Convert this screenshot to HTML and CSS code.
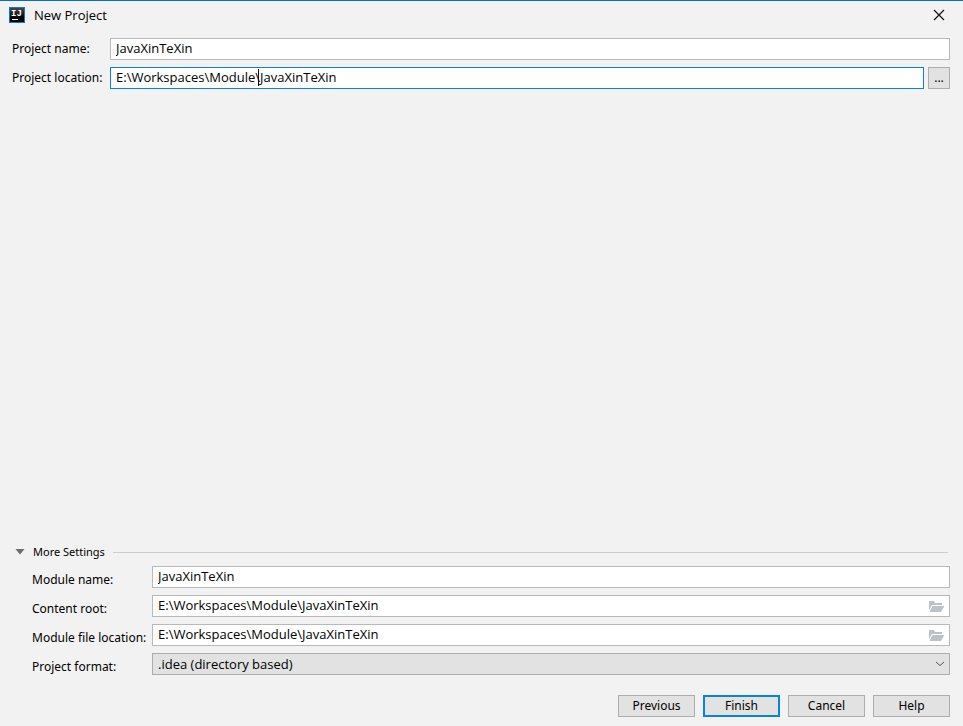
FILE: index.html
```
<!DOCTYPE html>
<html lang="en">
<head>
    <meta charset="UTF-8">
    <meta name="viewport" content="width=device-width, initial-scale=1.0">
    <title>New Project</title>
    <link rel="stylesheet" href="styles.css">
</head>
<body>
    <header class="title-bar">
        <svg class="app-icon" width="16" height="16" viewBox="0 0 16 16" aria-hidden="true">
            <defs>
                <linearGradient id="iconFill" x1="0" y1="0" x2="0" y2="1">
                    <stop offset="0" stop-color="#4a4a4a"/>
                    <stop offset="0.7" stop-color="#000"/>
                </linearGradient>
            </defs>
            <rect x="0.5" y="0.5" width="15" height="15" fill="url(#iconFill)" stroke="#087cdc"/>
            <text x="2" y="9" class="app-icon-text">IJ</text>
            <rect x="3" y="12" width="6" height="1" fill="#fff"/>
        </svg>
        <h1>New Project</h1>
        <button type="button" class="close-btn" aria-label="Close">
            <svg width="12" height="12" viewBox="0 0 12 12">
                <path d="M1 1 L11 11 M11 1 L1 11" stroke="#111" stroke-width="1.2" fill="none"/>
            </svg>
        </button>
    </header>

    <form class="project-form" id="projectForm">
        <div class="form-row">
            <label for="projectName">Project name:</label>
            <input type="text" id="projectName" value="JavaXinTeXin" spellcheck="false">
        </div>
        <div class="form-row">
            <label for="projectLocation">Project location:</label>
            <div class="field">
                <input type="text" class="active" id="projectLocation" value="E:\Workspaces\Module\JavaXinTeXin" spellcheck="false">
                <span class="caret"></span>
            </div>
            <button type="button" class="browse-btn" aria-label="Browse">...</button>
        </div>

        <section class="more-settings">
            <h2>
                <svg width="10" height="6" viewBox="0 0 10 6" aria-hidden="true">
                    <path d="M0.5 0 H9.5 L5 5.5 Z" fill="#6e6e6e"/>
                </svg>
                More Settings
            </h2>
            <div class="form-row">
                <label for="moduleName">Module name:</label>
                <input type="text" id="moduleName" value="JavaXinTeXin" spellcheck="false">
            </div>
            <div class="form-row">
                <label for="contentRoot">Content root:</label>
                <div class="field">
                    <input type="text" id="contentRoot" value="E:\Workspaces\Module\JavaXinTeXin" spellcheck="false">
                    <svg class="folder" width="16" height="12" viewBox="0 0 16 12" aria-hidden="true">
                        <path d="M0 9 V0 H5 L6 2 H13 V4 H3 Z" fill="#bcc3c8"/>
                        <path d="M3.5 5 H15.5 L12 11 H0.5 Z" fill="#bcc3c8"/>
                    </svg>
                </div>
            </div>
            <div class="form-row">
                <label for="moduleLocation">Module file location:</label>
                <div class="field">
                    <input type="text" id="moduleLocation" value="E:\Workspaces\Module\JavaXinTeXin" spellcheck="false">
                    <svg class="folder" width="16" height="12" viewBox="0 0 16 12" aria-hidden="true">
                        <path d="M0 9 V0 H5 L6 2 H13 V4 H3 Z" fill="#bcc3c8"/>
                        <path d="M3.5 5 H15.5 L12 11 H0.5 Z" fill="#bcc3c8"/>
                    </svg>
                </div>
            </div>
            <div class="form-row">
                <label for="projectFormat">Project format:</label>
                <div class="field">
                    <select id="projectFormat">
                        <option>.idea (directory based)</option>
                        <option>.ipr (file based)</option>
                    </select>
                    <svg class="arrow" width="10" height="6" viewBox="0 0 10 6" aria-hidden="true">
                        <path d="M1 1 L5 4.5 L9 1" stroke="#555" fill="none"/>
                    </svg>
                </div>
            </div>
        </section>

        <div class="buttons">
            <button type="button">Previous</button>
            <button type="submit" class="finish-btn">Finish</button>
            <button type="button">Cancel</button>
            <button type="button">Help</button>
        </div>
    </form>
</body>
</html>
```

FILE: styles.css
```
* {
    box-sizing: border-box;
}

body {
    margin: 0;
    min-height: 100vh;
    display: flex;
    flex-direction: column;
    border-top: 1px solid #006fc4;
    background-color: #f2f2f2;
    color: #000;
    font-family: "Noto Sans", "Open Sans", sans-serif;
    font-size: 12px;
    line-height: 20px;
}

.title-bar {
    display: flex;
    align-items: center;
    height: 29px;
    padding: 0 18px 1px 9px;
}

.title-bar h1 {
    flex: 1;
    margin: 0 0 0 9px;
    padding-bottom: 1px;
    font-family: "Open Sans", sans-serif;
    font-size: 13px;
    font-weight: normal;
}

.app-icon-text {
    font-family: "Liberation Mono", monospace;
    font-size: 9px;
    font-weight: bold;
    fill: #fff;
}

.project-form {
    flex: 1;
    display: flex;
    flex-direction: column;
    padding: 8px 13px 9px 12px;
}

.form-row {
    display: flex;
    align-items: center;
    margin-bottom: 7px;
}

.form-row label {
    flex: none;
    width: 98px;
    white-space: nowrap;
}

.field {
    position: relative;
    display: flex;
    flex: 1;
}

input,
select {
    flex: 1;
    min-width: 0;
    height: 22px;
    padding: 0 5px 2px;
    border: 1px solid #b9b9b9;
    border-radius: 0;
    background-color: #fff;
    color: #000;
    font-family: "Open Sans", sans-serif;
    font-size: 13px;
    outline: none;
}

input.active {
    border-color: #0a84d9;
}

.caret {
    position: absolute;
    left: 148px;
    top: 2px;
    width: 1px;
    height: 17px;
    background-color: #000;
}

button {
    height: 22px;
    padding: 0;
    border: 1px solid #adadad;
    background-color: #e2e2e2;
    color: #000;
    font: inherit;
    line-height: 20px;
}

.close-btn {
    display: flex;
    align-items: center;
    height: 12px;
    border: none;
    background: none;
}

.browse-btn {
    width: 22px;
    margin-left: 4px;
}

.more-settings {
    margin-top: auto;
}

.more-settings h2 {
    display: flex;
    align-items: center;
    gap: 8px;
    margin: 0 2px 4px 3px;
    font-size: 11px;
    font-weight: normal;
}

.more-settings h2::after {
    content: "";
    flex: 1;
    height: 1px;
    background-color: #cdcdcd;
}

.more-settings .form-row {
    padding-left: 20px;
}

.more-settings label {
    width: 120px;
    padding-top: 6px;
    line-height: 16px;
}

.folder {
    position: absolute;
    right: 5px;
    top: 6px;
}

select {
    appearance: none;
    padding-bottom: 0;
    border-color: #adadad;
    background-color: #e2e2e2;
}

.arrow {
    position: absolute;
    right: 5px;
    top: 8px;
}

.buttons {
    display: flex;
    justify-content: flex-end;
    gap: 8px;
    margin-top: 13px;
}

.buttons button {
    width: 77px;
}

.buttons .finish-btn {
    border: 2px solid #0a84d9;
    line-height: 18px;
}
```
